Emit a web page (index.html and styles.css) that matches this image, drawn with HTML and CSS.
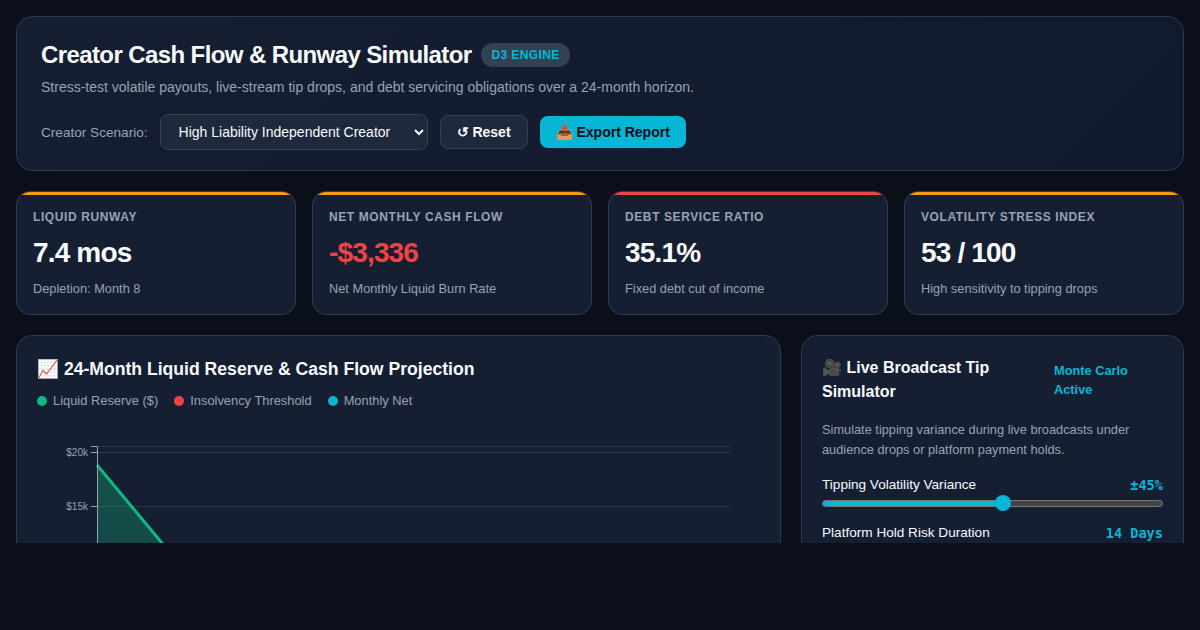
FILE: index.html
```html
<!DOCTYPE html>
<html lang="en">
<head>
<meta charset="utf-8">
<title>Creator Cash Flow &amp; Runway Simulator</title>
<link rel="stylesheet" href="styles.css">
</head>
<body>
<div class="page">
  <header class="panel header">
    <div class="title-row">
      <h1>Creator Cash Flow &amp; Runway Simulator</h1>
      <span class="badge">D3 ENGINE</span>
    </div>
    <p class="subtitle">Stress-test volatile payouts, live-stream tip drops, and debt servicing obligations over a 24-month horizon.</p>
    <div class="controls">
      <label class="scenario-label" for="scenario">Creator Scenario:</label>
      <select id="scenario" class="scenario"><option>High Liability Independent Creator</option></select>
      <button class="btn btn-reset">↺ Reset</button>
      <button class="btn btn-export">📥 Export Report</button>
    </div>
  </header>

  <section class="kpis">
    <div class="kpi amber">
      <div class="kpi-label">LIQUID RUNWAY</div>
      <div class="kpi-value">7.4 mos</div>
      <div class="kpi-note">Depletion: Month 8</div>
    </div>
    <div class="kpi amber">
      <div class="kpi-label">NET MONTHLY CASH FLOW</div>
      <div class="kpi-value neg">-$3,336</div>
      <div class="kpi-note">Net Monthly Liquid Burn Rate</div>
    </div>
    <div class="kpi red">
      <div class="kpi-label">DEBT SERVICE RATIO</div>
      <div class="kpi-value">35.1%</div>
      <div class="kpi-note">Fixed debt cut of income</div>
    </div>
    <div class="kpi amber">
      <div class="kpi-label">VOLATILITY STRESS INDEX</div>
      <div class="kpi-value">53 / 100</div>
      <div class="kpi-note">High sensitivity to tipping drops</div>
    </div>
  </section>

  <section class="lower">
    <div class="panel chart-panel">
      <h2>📈 24-Month Liquid Reserve &amp; Cash Flow Projection</h2>
      <div class="legend">
        <span class="legend-item"><i class="dot green"></i>Liquid Reserve ($)</span>
        <span class="legend-item"><i class="dot redd"></i>Insolvency Threshold</span>
        <span class="legend-item"><i class="dot cyan"></i>Monthly Net</span>
      </div>
      <svg class="chart" width="723" height="320" viewBox="0 0 723 320">
        <defs>
          <linearGradient id="area" x1="0" y1="0" x2="0" y2="1">
            <stop offset="0" stop-color="#10b981" stop-opacity="0.34"/>
            <stop offset="1" stop-color="#10b981" stop-opacity="0.1"/>
          </linearGradient>
        </defs>
        <g class="grid">
          <line x1="60" y1="26.5" x2="693" y2="26.5"/>
          <line x1="60" y1="32.5" x2="693" y2="32.5"/>
          <line x1="60" y1="86.5" x2="693" y2="86.5"/>
        </g>
        <path d="M60 45 L125 123 L125 320 L60 320 Z" fill="url(#area)"/>
        <path d="M60 45 L230 249" class="reserve"/>
        <path d="M54 26.5 H60.5 V320" class="axis"/>
        <line x1="54" y1="32.5" x2="60" y2="32.5" class="axis"/>
        <line x1="54" y1="86.5" x2="60" y2="86.5" class="axis"/>
        <text x="51" y="35.5" class="tick">$20k</text>
        <text x="51" y="89.5" class="tick">$15k</text>
      </svg>
    </div>

    <div class="panel sim-panel">
      <div class="sim-head">
        <h2 class="sim-title">🎥 Live Broadcast Tip Simulator</h2>
        <span class="sim-status">Monte Carlo Active</span>
      </div>
      <p class="sim-desc">Simulate tipping variance during live broadcasts under audience drops or platform payment holds.</p>
      <div class="slider-row">
        <span>Tipping Volatility Variance</span>
        <span class="slider-val">±45%</span>
      </div>
      <div class="slider"><div class="slider-fill"></div><div class="slider-thumb"></div></div>
      <div class="slider-row second">
        <span>Platform Hold Risk Duration</span>
        <span class="slider-val">14 Days</span>
      </div>
    </div>
  </section>
</div>
</body>
</html>
```
FILE: styles.css
```css
* { box-sizing: border-box; }
html, body { margin: 0; height: 630px; overflow: hidden; }
body {
  background: #0b0f19;
  font-family: "Liberation Sans", Arial, sans-serif;
  color: #f8fafc;
}
.page {
  height: 543px;
  overflow: hidden;
  padding: 16px 16px 0;
}
.panel {
  background: #161f32;
  border: 1px solid #2c3a4e;
  border-radius: 16px;
}
.header {
  height: 155px;
  padding: 24px;
  background: linear-gradient(135deg, #161f32, #111a2c);
}
.title-row { display: flex; align-items: center; gap: 10px; height: 28px; }
h1 { margin: 0; font-size: 24px; line-height: 28px; font-weight: 700; letter-spacing: -0.6px; color: #f8fafc; }
.badge {
  background: #334155;
  color: #06b6d4;
  font-size: 12px;
  font-weight: 700;
  letter-spacing: 0.4px;
  padding: 5px 10px;
  border-radius: 12px;
  line-height: 14px;
}
.subtitle { margin: 8px 0 0; font-size: 14px; line-height: 20px; color: #94a3b8; }
.controls { display: flex; align-items: center; margin-top: 17px; }
.scenario-label { font-size: 13.6px; color: #94a3b8; margin-right: 12px; }
.scenario {
  width: 268px;
  height: 36px;
  background: #1e293b;
  color: #f8fafc;
  border: 1px solid #334155;
  border-radius: 8px;
  padding: 0 14px;
  font-family: "Liberation Sans", Arial, sans-serif;
  font-size: 14px;
  margin-right: 12px;
}
.btn {
  height: 34px;
  border-radius: 8px;
  font-family: "Liberation Sans", Arial, sans-serif;
  font-size: 14px;
  font-weight: 700;
  padding: 0 16px;
}
.btn-reset { background: #1e293b; color: #f8fafc; border: 1px solid #334155; margin-right: 12px; }
.btn-export { background: #06b6d4; color: #090d16; border: 0; height: 32px; }
.kpis { display: grid; grid-template-columns: repeat(4, 1fr); gap: 16px; margin-top: 20px; }
.kpi {
  position: relative;
  overflow: hidden;
  height: 124px;
  background: #161f32;
  border: 1px solid #2c3a4e;
  border-radius: 14px;
  padding: 18px 16px 0;
}
.kpi::before {
  content: "";
  position: absolute;
  left: 0;
  right: 0;
  top: 0;
  height: 3px;
  background: #f59e0b;
}
.kpi.red::before { background: #ef4444; }
.kpi-label { font-size: 12px; line-height: 14px; font-weight: 700; letter-spacing: 0.6px; color: #94a3b8; }
.kpi-value { margin-top: 12px; font-size: 28px; line-height: 34px; font-weight: 700; letter-spacing: -0.84px; color: #f8fafc; }
.kpi-value.neg { color: #ef4444; }
.kpi-note { margin-top: 11px; font-size: 12.8px; line-height: 16px; color: #94a3b8; }
.lower { display: grid; grid-template-columns: 2fr 1fr; gap: 20px; margin-top: 20px; }
.chart-panel { padding: 20px; height: 400px; }
h2 { margin: 0; font-size: 17.6px; line-height: 26px; font-weight: 700; color: #f8fafc; }
.legend { display: flex; gap: 16px; margin-top: 11px; font-size: 12.88px; line-height: 16px; color: #94a3b8; }
.legend-item { display: flex; align-items: center; gap: 6px; }
.dot { width: 10px; height: 10px; border-radius: 50%; display: block; }
.dot.green { background: #10b981; }
.dot.redd { background: #ef4444; }
.dot.cyan { background: #06b6d4; }
.chart { display: block; margin-top: 11px; }
.grid line { stroke: #2c3747; stroke-width: 1; }
.axis { stroke: #94a3b8; stroke-width: 1; fill: none; }
.reserve { stroke: #10b981; stroke-width: 3; fill: none; }
.tick { font-size: 10px; fill: #94a3b8; text-anchor: end; font-family: "Liberation Sans", Arial, sans-serif; }
.sim-panel { padding: 20px; height: 400px; }
.sim-head { display: flex; justify-content: space-between; align-items: center; gap: 20px; }
.sim-title { font-size: 16px; line-height: 24px; flex: 0 0 212px; }
.sim-status { font-size: 12.8px; line-height: 19px; font-weight: 700; color: #06b6d4; flex: 0 0 109px; }
.sim-desc { margin: 16px 0 0; font-size: 12.8px; line-height: 20px; color: #94a3b8; }
.slider-row { display: flex; justify-content: space-between; align-items: center; margin-top: 15px; font-size: 13.6px; line-height: 20px; color: #f8fafc; }
.slider-row.second { margin-top: 16px; }
.slider-val { font-family: "DejaVu Sans Mono", monospace; font-weight: 700; font-size: 13.6px; color: #06b6d4; }
.slider {
  position: relative;
  height: 7px;
  margin-top: 5px;
  background: #444;
  border: 1px solid #777;
  border-radius: 4px;
}
.slider-fill { height: 5px; width: 53%; background: #06b6d4; border-radius: 2px; }
.slider-thumb {
  position: absolute;
  left: 172px;
  top: -6px;
  width: 16px;
  height: 16px;
  border-radius: 50%;
  background: #06b6d4;
}
```
